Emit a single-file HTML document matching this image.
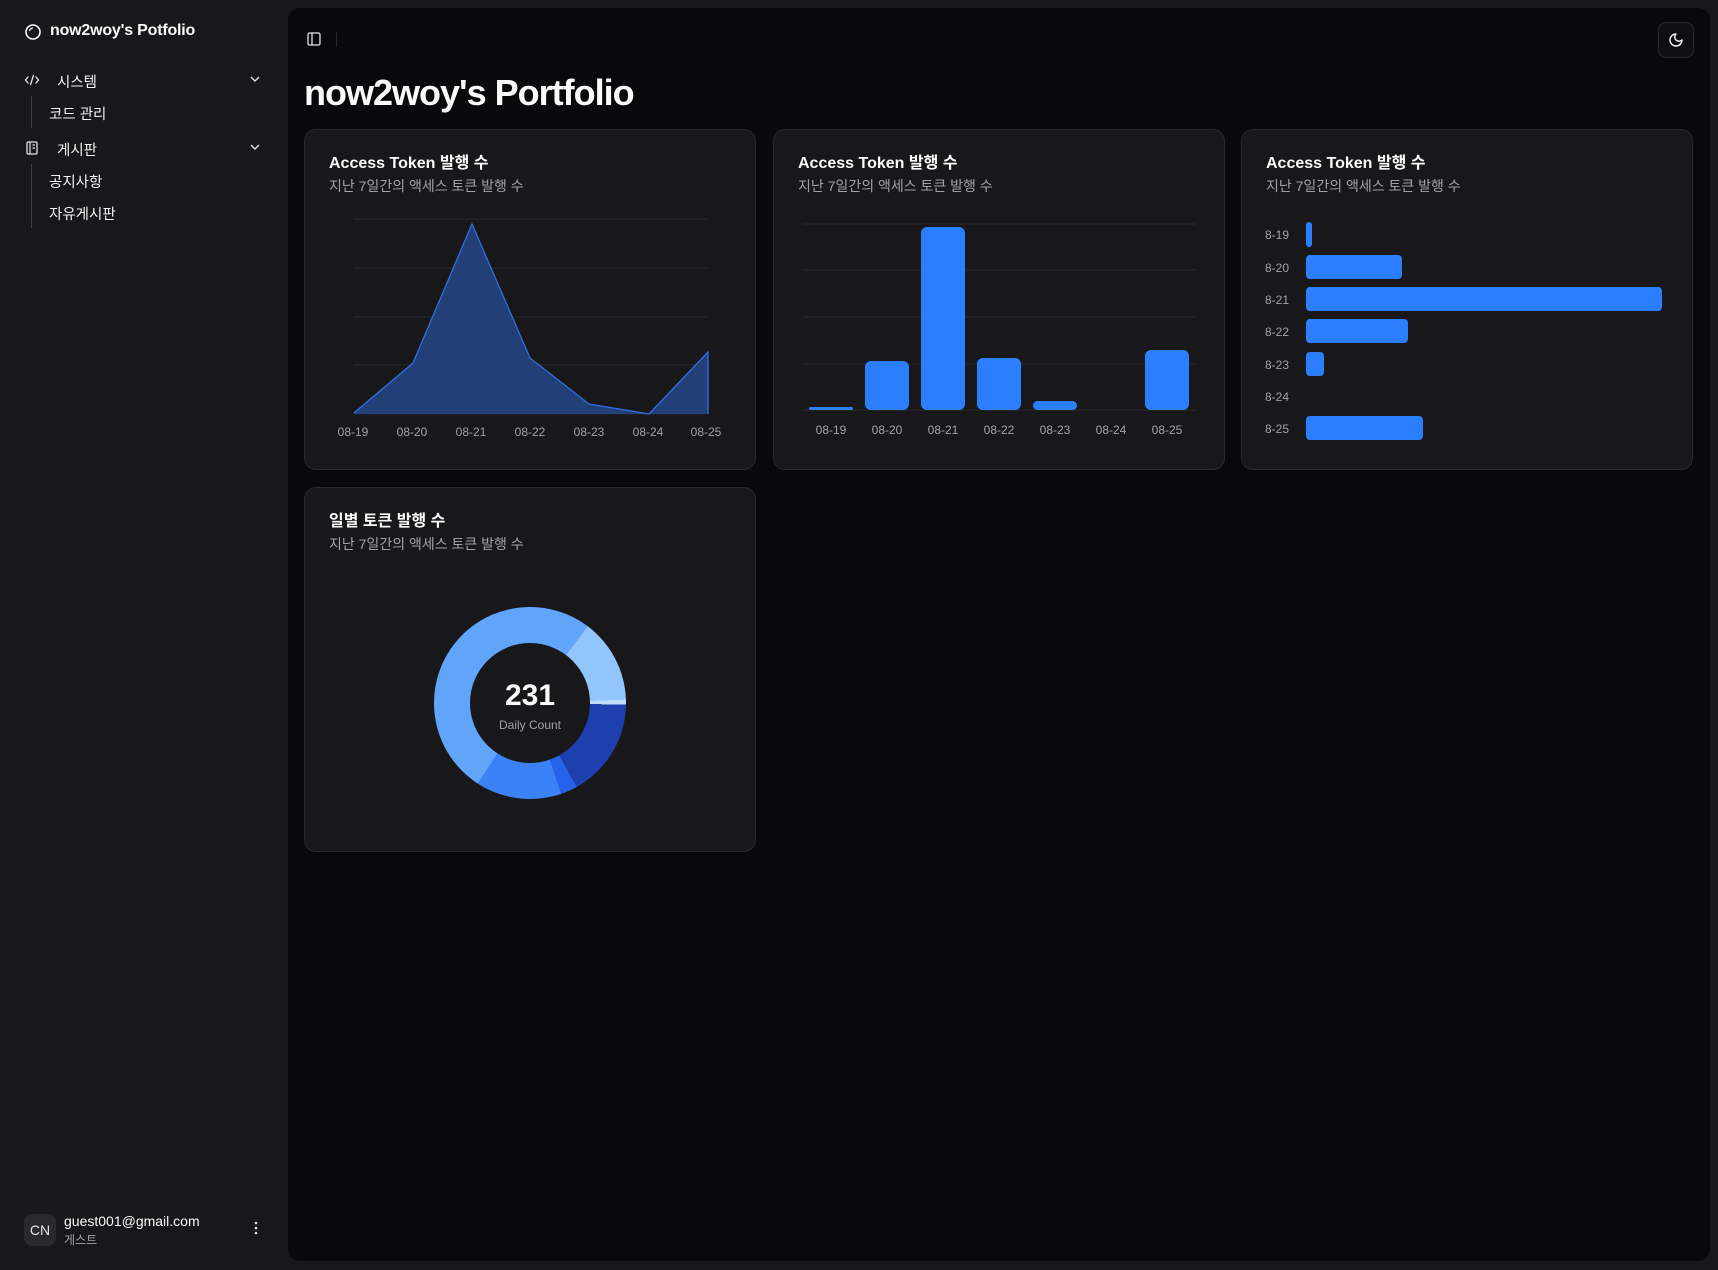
<!DOCTYPE html>
<html><head><meta charset="utf-8"><style>
*{margin:0;padding:0;box-sizing:border-box}
body{width:1718px;height:1270px;background:#18181b;font-family:"Liberation Sans","Noto Sans CJK KR",sans-serif;color:#fafafa;position:relative;overflow:hidden}
.abs{position:absolute;white-space:nowrap}
.main{position:absolute;left:288px;top:8px;width:1422px;height:1253px;background:#09090b;border-radius:12px}
.card{position:absolute;background:#18181b;border:1px solid #2a2a2e;border-radius:12px}
.ct{position:absolute;left:24px;top:19px;font-size:16px;font-weight:bold;color:#fafafa}
.cs{position:absolute;left:24px;top:46px;font-size:14px;color:#a1a1aa}
.nav{font-size:14.5px;color:#f4f4f5}
.lbl{font-size:12px;fill:#a1a1aa;font-family:"Liberation Sans",sans-serif}
</style></head><body>
<svg class="abs" style="left:24px;top:23px" width="18" height="18" viewBox="0 0 18 18"><circle cx="9" cy="9" r="7" fill="none" stroke="#fafafa" stroke-width="1.6"/><path d="M5.5 8 A4 4 0 0 1 9 5" stroke="#fafafa" stroke-width="1.2" fill="none"/></svg>
<div class="abs" style="left:50px;top:22px;font-size:16px;font-weight:bold;letter-spacing:-0.2px">now2woy's Potfolio</div>
<svg class="abs" style="left:24px;top:73px" width="16" height="14" viewBox="0 0 16 14"><path d="M4 4 L1.5 7 L4 10 M12 4 L14.5 7 L12 10 M9.5 2.5 L6.5 11.5" stroke="#e4e4e7" stroke-width="1.3" fill="none" stroke-linecap="round"/></svg>
<div class="abs nav" style="left:57px;top:71px">시스템</div>
<svg class="abs" style="left:249px;top:74px" width="12" height="10" viewBox="0 0 12 10"><path d="M2 3 L6 7 L10 3" stroke="#e4e4e7" stroke-width="1.4" fill="none"/></svg>
<div class="abs" style="left:31px;top:96px;width:1px;height:32px;background:#3f3f46"></div>
<div class="abs nav" style="left:49px;top:103px">코드 관리</div>
<svg class="abs" style="left:25px;top:140px" width="14" height="16" viewBox="0 0 14 16"><rect x="2" y="2" width="10" height="12" rx="1.2" fill="none" stroke="#e4e4e7" stroke-width="1.3"/><path d="M5 2v12M7.5 5h2.5M7.5 8h2.5" stroke="#e4e4e7" stroke-width="1.2"/></svg>
<div class="abs nav" style="left:57px;top:139px">게시판</div>
<svg class="abs" style="left:249px;top:142px" width="12" height="10" viewBox="0 0 12 10"><path d="M2 3 L6 7 L10 3" stroke="#e4e4e7" stroke-width="1.4" fill="none"/></svg>
<div class="abs" style="left:31px;top:164px;width:1px;height:64px;background:#3f3f46"></div>
<div class="abs nav" style="left:49px;top:171px">공지사항</div>
<div class="abs nav" style="left:49px;top:203px">자유게시판</div>
<div class="abs" style="left:24px;top:1214px;width:32px;height:32px;border-radius:8px;background:#2a2a2e;font-size:14px;color:#e4e4e7;text-align:center;line-height:32px">CN</div>
<div class="abs" style="left:64px;top:1213px;font-size:14px;color:#fafafa">guest001@gmail.com</div>
<div class="abs" style="left:64px;top:1231px;font-size:12px;color:#a1a1aa">게스트</div>
<svg class="abs" style="left:252px;top:1220px" width="8" height="16"><circle cx="4" cy="3" r="1.3" fill="#e4e4e7"/><circle cx="4" cy="8" r="1.3" fill="#e4e4e7"/><circle cx="4" cy="13" r="1.3" fill="#e4e4e7"/></svg>

<div class="main"></div>
<svg class="abs" style="left:307px;top:32px" width="14" height="14" viewBox="0 0 14 14"><rect x="1" y="1" width="12" height="12" rx="1.5" fill="none" stroke="#e4e4e7" stroke-width="1.3"/><path d="M5 1v12" stroke="#e4e4e7" stroke-width="1.3"/></svg>
<div class="abs" style="left:336px;top:32px;width:1px;height:15px;background:#27272a"></div>
<div class="abs" style="left:1658px;top:22px;width:36px;height:36px;border:1px solid #2a2a2e;border-radius:8px;background:#0f0f11"></div>
<svg class="abs" style="left:1668px;top:32px" width="16" height="16" viewBox="0 0 16 16"><path d="M8 2 A6 6 0 1 0 14 8 A4.2 4.2 0 0 1 8 2 Z" fill="none" stroke="#fafafa" stroke-width="1.4" stroke-linejoin="round"/></svg>
<div class="abs" style="left:304px;top:72px;font-size:36px;font-weight:bold;letter-spacing:-1px">now2woy's Portfolio</div>

<div class="card" style="left:304px;top:129px;width:452px;height:341px">
<div class="ct">Access Token 발행 수</div><div class="cs">지난 7일간의 액세스 토큰 발행 수</div></div>
<svg class="abs" style="left:0;top:0" width="1718" height="520">
<g stroke="#27272a" stroke-width="1"><path d="M354 219H708M354 268H708M354 317H708M354 365H708M354 414H708"/></g>
<path d="M354 413 L413 363 L472 224 L530 358 L589 404 L649 414 L708 352 L708 414 L354 414Z" fill="#223f78" stroke="none"/>
<path d="M354 413 L413 363 L472 224 L530 358 L589 404 L649 414 L708 352 L708 414" fill="none" stroke="#2f6fe0" stroke-width="1.3"/>
<g class="lbl" text-anchor="middle"><text x="353" y="436">08-19</text><text x="412" y="436">08-20</text><text x="471" y="436">08-21</text><text x="530" y="436">08-22</text><text x="589" y="436">08-23</text><text x="648" y="436">08-24</text><text x="706" y="436">08-25</text></g>
</svg>

<div class="card" style="left:773px;top:129px;width:452px;height:341px">
<div class="ct">Access Token 발행 수</div><div class="cs">지난 7일간의 액세스 토큰 발행 수</div></div>
<svg class="abs" style="left:0;top:0" width="1718" height="520">
<g stroke="#27272a"><path d="M803 224H1196M803 270H1196M803 317H1196M803 364H1196M803 410H1196"/></g>
<g fill="#2b7fff">
<rect x="809" y="407" width="44" height="3" rx="1.5"/>
<rect x="865" y="361" width="44" height="49" rx="6"/>
<rect x="921" y="227" width="44" height="183" rx="6"/>
<rect x="977" y="358" width="44" height="52" rx="6"/>
<rect x="1033" y="401" width="44" height="9" rx="4.5"/>
<rect x="1145" y="350" width="44" height="60" rx="6"/>
</g>
<g class="lbl" text-anchor="middle"><text x="831" y="434">08-19</text><text x="887" y="434">08-20</text><text x="943" y="434">08-21</text><text x="999" y="434">08-22</text><text x="1055" y="434">08-23</text><text x="1111" y="434">08-24</text><text x="1167" y="434">08-25</text></g>
</svg>

<div class="card" style="left:1241px;top:129px;width:452px;height:341px">
<div class="ct">Access Token 발행 수</div><div class="cs">지난 7일간의 액세스 토큰 발행 수</div></div>
<svg class="abs" style="left:0;top:0" width="1718" height="520">
<g class="lbl"><text x="1265" y="239">8-19</text><text x="1265" y="272">8-20</text><text x="1265" y="304">8-21</text><text x="1265" y="336">8-22</text><text x="1265" y="369">8-23</text><text x="1265" y="401">8-24</text><text x="1265" y="433">8-25</text></g>
<g fill="#2b7fff">
<rect x="1306" y="222" width="6" height="25" rx="3"/>
<rect x="1306" y="255" width="96" height="24" rx="4"/>
<rect x="1306" y="287" width="356" height="24" rx="4"/>
<rect x="1306" y="319" width="102" height="24" rx="4"/>
<rect x="1306" y="352" width="18" height="24" rx="4"/>
<rect x="1306" y="416" width="117" height="24" rx="4"/>
</g></svg>

<div class="card" style="left:304px;top:487px;width:452px;height:365px">
<div class="ct">일별 토큰 발행 수</div><div class="cs">지난 7일간의 액세스 토큰 발행 수</div></div>
<div class="abs" style="left:434px;top:607px;width:192px;height:192px;border-radius:50%;background:conic-gradient(#60a5fa 0deg 37deg,#93c5fd 37deg 88deg,#bfdbfe 88deg 91deg,#1e40af 91deg 151deg,#2563eb 151deg 161deg,#3b82f6 161deg 213deg,#60a5fa 213deg 360deg)"></div>
<div class="abs" style="left:470px;top:643px;width:120px;height:120px;border-radius:50%;background:#18181b"></div>
<div class="abs" style="left:430px;top:679px;width:200px;text-align:center;font-size:30px;font-weight:bold">231</div>
<div class="abs" style="left:430px;top:718px;width:200px;text-align:center;font-size:12px;color:#a1a1aa">Daily Count</div>
</body></html>
